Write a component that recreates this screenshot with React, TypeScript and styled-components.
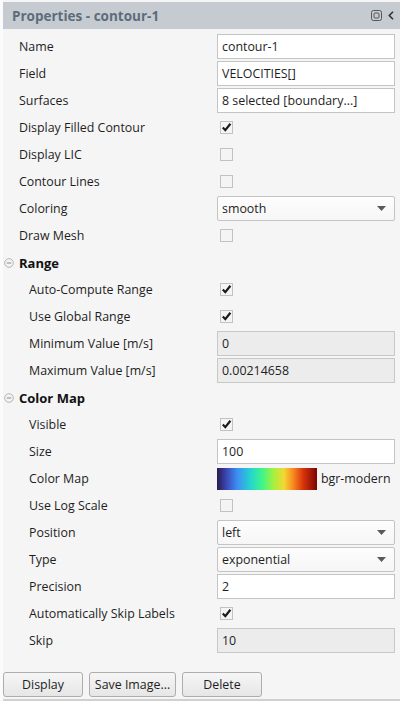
import React from "react";
import styled, { createGlobalStyle } from "styled-components";

const Global = createGlobalStyle`
  html, body { margin: 0; padding: 0; background: #f5f5f5; }
  body { font-family: "Open Sans", "Noto Sans", sans-serif; }
`;

const Panel = styled.div`
  width: 400px;
  height: 701px;
  display: flex;
  flex-direction: column;
  background: #f5f5f5;
  box-sizing: border-box;
  border-left: 3px solid #fbfbfb;
  overflow: hidden;
`;

const TitleBar = styled.div`
  height: 27px;
  margin-top: 2px;
  margin-left: -3px;
  background: #c6cbd1;
  display: flex;
  align-items: center;
  padding: 0 6px 0 12px;
  color: #5d6c7b;
  font-weight: 700;
  font-size: 13.5px;
`;

const TitleText = styled.span`
  flex: 1;
`;

const TitleIcons = styled.div`
  display: flex;
  align-items: center;
  gap: 6px;
  color: #444;
`;

const Body = styled.div`
  flex: 1;
  display: flex;
  flex-direction: column;
  padding-top: 4px;
`;

const Row = styled.div`
  height: 27px;
  display: grid;
  grid-template-columns: 214px 178px;
  align-items: center;
`;

const Label = styled.div<{ $indent?: boolean }>`
  padding-left: ${(p) => (p.$indent ? "26px" : "16px")};
  font-size: 12.4px;
  color: #1e1e1e;
  white-space: nowrap;
`;

const Header = styled.div`
  height: 27px;
  display: flex;
  align-items: center;
  gap: 5px;
  margin-left: 1px;
  font-size: 13px;
  font-weight: 700;
  color: #111;
`;

const Field = styled.div<{ $disabled?: boolean }>`
  height: 25px;
  box-sizing: border-box;
  border: 1px solid ${(p) => (p.$disabled ? "#c8c8c8" : "#c4c4c4")};
  background: ${(p) => (p.$disabled ? "#ececec" : "#ffffff")};
  display: flex;
  align-items: center;
  padding: 0 4px;
  font-size: 12.4px;
  color: #1e1e1e;
  white-space: nowrap;
  overflow: hidden;
`;

const Select = styled(Field)`
  justify-content: space-between;
  border-radius: 2px;
  background: linear-gradient(#fdfdfd, #f6f6f6);
  padding-right: 8px;
`;

const Check = styled.div`
  width: 13px;
  height: 13px;
  margin-left: 3px;
  box-sizing: border-box;
  border: 1px solid #c2c2c2;
  background: #f4f4f4;
  display: flex;
  align-items: center;
  justify-content: center;
`;

const MapCell = styled.div`
  display: flex;
  align-items: center;
  gap: 4px;
  font-size: 12.4px;
  color: #1e1e1e;
`;

const MapBar = styled.div`
  width: 100px;
  height: 22px;
  background: linear-gradient(
    to right,
    #2a1c4e 0%,
    #3a3fa8 8%,
    #3f8cf5 20%,
    #24d3d0 33%,
    #3ef58c 45%,
    #a8f03c 57%,
    #f2d833 67%,
    #f98a1f 76%,
    #d8350c 86%,
    #7a0503 100%
  );
`;

const Footer = styled.div`
  display: flex;
  gap: 6px;
  padding: 0 0 2px 3px;
  border-bottom: 2px solid #d0d0d0;
  margin-left: -3px;
`;

const Button = styled.button<{ $w: number }>`
  width: ${(p) => p.$w}px;
  height: 25px;
  box-sizing: border-box;
  border: 1px solid #adadad;
  border-radius: 3px;
  background: linear-gradient(#f6f6f6, #e6e6e6);
  font-family: "Open Sans", "Noto Sans", sans-serif;
  font-size: 12.4px;
  color: #1e1e1e;
  padding: 0;
`;

const Spacer = styled.div`
  flex: 1;
`;

const CheckMark = () => (
  <svg width="11" height="11" viewBox="0 0 11 11">
    <path d="M1.8 5.6 L4.3 8.2 L9.4 1.8" fill="none" stroke="#1a1a1a" strokeWidth="2.2" />
  </svg>
);

const Arrow = () => (
  <svg width="9" height="5" viewBox="0 0 9 5">
    <path d="M0 0 H9 L4.5 5 Z" fill="#5a5a5a" />
  </svg>
);

const Collapse = () => (
  <svg width="10" height="10" viewBox="0 0 10 10">
    <circle cx="5" cy="5" r="4.3" fill="#f4f4f4" stroke="#b5b5b5" />
    <path d="M2.8 5 H7.2" stroke="#9a9a9a" strokeWidth="1.2" />
  </svg>
);

type Ctl =
  | { kind: "text"; value: string; disabled?: boolean }
  | { kind: "check"; checked: boolean }
  | { kind: "select"; value: string }
  | { kind: "map" };

const renderCtl = (c: Ctl) => {
  switch (c.kind) {
    case "text":
      return <Field $disabled={c.disabled}>{c.value}</Field>;
    case "check":
      return <Check>{c.checked && <CheckMark />}</Check>;
    case "select":
      return (
        <Select>
          <span>{c.value}</span>
          <Arrow />
        </Select>
      );
    case "map":
      return (
        <MapCell>
          <MapBar />
          bgr-modern
        </MapCell>
      );
  }
};

type Item =
  | { type: "row"; label: string; indent?: boolean; ctl: Ctl }
  | { type: "header"; label: string };

const items: Item[] = [
  { type: "row", label: "Name", ctl: { kind: "text", value: "contour-1" } },
  { type: "row", label: "Field", ctl: { kind: "text", value: "VELOCITIES[]" } },
  { type: "row", label: "Surfaces", ctl: { kind: "text", value: "8 selected [boundary...]" } },
  { type: "row", label: "Display Filled Contour", ctl: { kind: "check", checked: true } },
  { type: "row", label: "Display LIC", ctl: { kind: "check", checked: false } },
  { type: "row", label: "Contour Lines", ctl: { kind: "check", checked: false } },
  { type: "row", label: "Coloring", ctl: { kind: "select", value: "smooth" } },
  { type: "row", label: "Draw Mesh", ctl: { kind: "check", checked: false } },
  { type: "header", label: "Range" },
  { type: "row", label: "Auto-Compute Range", indent: true, ctl: { kind: "check", checked: true } },
  { type: "row", label: "Use Global Range", indent: true, ctl: { kind: "check", checked: true } },
  { type: "row", label: "Minimum Value [m/s]", indent: true, ctl: { kind: "text", value: "0", disabled: true } },
  { type: "row", label: "Maximum Value [m/s]", indent: true, ctl: { kind: "text", value: "0.00214658", disabled: true } },
  { type: "header", label: "Color Map" },
  { type: "row", label: "Visible", indent: true, ctl: { kind: "check", checked: true } },
  { type: "row", label: "Size", indent: true, ctl: { kind: "text", value: "100" } },
  { type: "row", label: "Color Map", indent: true, ctl: { kind: "map" } },
  { type: "row", label: "Use Log Scale", indent: true, ctl: { kind: "check", checked: false } },
  { type: "row", label: "Position", indent: true, ctl: { kind: "select", value: "left" } },
  { type: "row", label: "Type", indent: true, ctl: { kind: "select", value: "exponential" } },
  { type: "row", label: "Precision", indent: true, ctl: { kind: "text", value: "2" } },
  { type: "row", label: "Automatically Skip Labels", indent: true, ctl: { kind: "check", checked: true } },
  { type: "row", label: "Skip", indent: true, ctl: { kind: "text", value: "10", disabled: true } },
];

export default function App() {
  return (
    <>
      <Global />
      <Panel>
        <TitleBar>
          <TitleText>Properties - contour-1</TitleText>
          <TitleIcons>
            <svg width="11" height="11" viewBox="0 0 11 11">
              <rect x="0.5" y="0.5" width="10" height="10" rx="2" fill="none" stroke="#555" />
              <rect x="3" y="3" width="5" height="5" rx="1" fill="none" stroke="#555" />
            </svg>
            <svg width="6" height="9" viewBox="0 0 6 9">
              <path d="M5 0.8 L1.3 4.5 L5 8.2" fill="none" stroke="#333" strokeWidth="1.6" />
            </svg>
          </TitleIcons>
        </TitleBar>
        <Body>
          {items.map((it, i) =>
            it.type === "header" ? (
              <Header key={i}>
                <Collapse />
                {it.label}
              </Header>
            ) : (
              <Row key={i}>
                <Label $indent={it.indent}>{it.label}</Label>
                {renderCtl(it.ctl)}
              </Row>
            )
          )}
          <Spacer />
          <Footer>
            <Button $w={80}>Display</Button>
            <Button $w={87}>Save Image...</Button>
            <Button $w={80}>Delete</Button>
          </Footer>
        </Body>
      </Panel>
    </>
  );
}
